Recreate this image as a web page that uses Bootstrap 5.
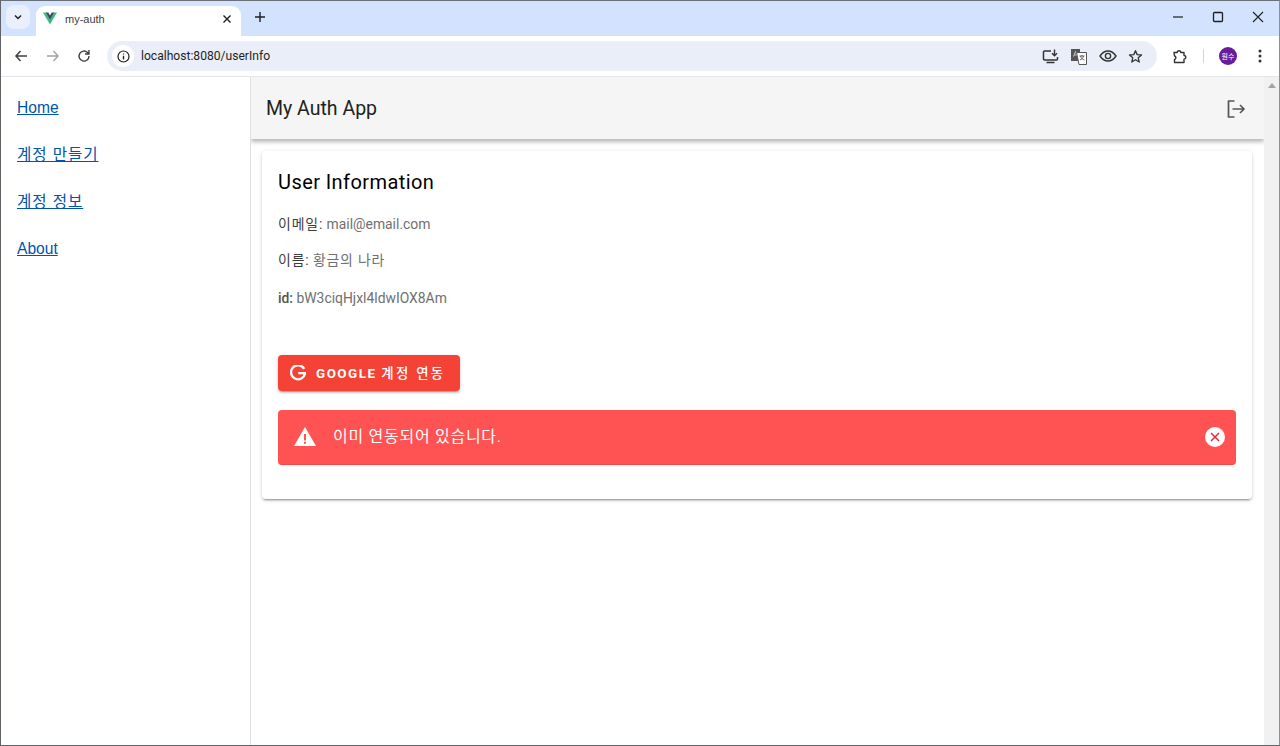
<!DOCTYPE html>
<html lang="ko">
<head>
<meta charset="utf-8">
<title>my-auth</title>
<link href="https://cdn.jsdelivr.net/npm/bootstrap@5.3.0/dist/css/bootstrap.min.css" rel="stylesheet">
<style>
html,body{height:746px;overflow:hidden;margin:0}
body{font-family:Roboto,"Noto Sans CJK KR",sans-serif;background:#fff;color:#000}
.win-frame{height:746px;border:1px solid #5f6368;border-right-color:#8a8f98;border-bottom-color:#5f6368;border-top-color:#6b7078}
.tabstrip{height:35px;background:#d3e3fd;padding-left:5px}
.tab-menu{width:24px;height:24px;margin-top:4px;background:#e9f0fc;border-radius:8px}
.chrome-tab{width:205px;height:30px;margin-top:5px;margin-left:6px;background:#fff;border-radius:9px 9px 0 0;padding:0 9px 5px 7px;font:11px "Liberation Sans",Arial,sans-serif;color:#3c4043}
.tab-title{margin-left:8px}
.newtab-btn{margin-left:13px;padding-bottom:3px}
.win-btns{margin-left:auto;gap:28px;padding-right:15px;padding-bottom:3px}
.toolbar-row{height:41px;background:#fff;border-bottom:1px solid #e3e5e8;border-radius:0;padding-left:12px}
.nav-ico{width:16px;height:16px}
.nav-gap{gap:15.500px}
.omnibox{flex:none;margin-left:15px;width:1050px;height:30px;border-radius:15px;background:#e9eef8;padding-left:5px;font:12.100px Roboto,sans-serif;color:#1f1f1f}
.info-pill{width:22px;height:22px;border-radius:50%;background:#fff;margin-right:7px}
.omni-icons{margin-left:auto;gap:11.300px;padding-right:14px}
.ext-zone{flex:none;margin-left:15px;width:92px}
.sep-bar{width:1px;height:14px;background:#c7d7f3;margin:0 15px 0 15px}
.avatar-dot{width:18px;height:18px;border-radius:50%;background:#6a1b9a;color:#fff;font:7px "Noto Sans CJK KR",sans-serif;line-height:18px;text-align:center}
.kebab{margin-left:21px}
.page-area{height:668px}
.side-rail{width:250px;flex:none;border-right:1px solid #e0e0e0;padding:19px 0 0 16px;font:15.600px "Noto Sans CJK KR",sans-serif}
.side-rail a{display:block;height:47px;line-height:24px;color:#0054ae;font-family:"Liberation Sans","Noto Sans CJK KR",sans-serif}
.ko-link{letter-spacing:.9px}
.main-col{flex:1;min-width:0;overflow:hidden}
.app-bar{height:62px;background:#f5f5f5;padding:1px 17px 0 15px;box-shadow:0 3px 4px rgba(0,0,0,.28);position:relative;font-size:19.500px;color:#212121}
.main-body{padding:12px 12px 12px 11px}
.info-panel{height:348px;border:0;border-radius:4px;padding:16px;box-shadow:0 3px 1px -2px rgba(0,0,0,.2),0 2px 2px rgba(0,0,0,.14),0 1px 5px rgba(0,0,0,.12)}
.panel-title{font-size:20px;font-weight:400;line-height:30px;margin:0 0 17px;letter-spacing:.42px}
.info-line{font-size:13.900px;line-height:20px;color:#707070;margin:0}
.info-line b{font-weight:400;color:#3d3d3d;letter-spacing:.85px}
.info-line b.latin-key{font-weight:500;color:#555;letter-spacing:0}
.ko-val{letter-spacing:.8px}
.line-a{margin-bottom:16px}
.line-b{margin-bottom:18px}
.g-btn{width:182px;height:36px;margin-top:47px;background:#f44336;border:0;border-radius:4px;color:#fff;font-size:13.400px;font-weight:700;letter-spacing:1.500px;padding:0 0 0 12px;box-shadow:0 3px 1px -2px rgba(0,0,0,.2),0 2px 2px rgba(0,0,0,.14),0 1px 5px rgba(0,0,0,.12)}
.g-btn:hover{background:#f44336;color:#fff}
.g-label{margin-left:10px;padding-top:3px}
.g-ko{font-weight:500;letter-spacing:2.300px}
.err-alert{height:55px;margin-top:19px;background:#ff5252;border:0;border-bottom:1px solid #f44;border-radius:4px;color:#fff;padding:0 11px 0 16px;font-size:16px;margin-bottom:0}
.err-text{margin-left:17px;letter-spacing:.72px}
.err-close{margin-left:auto;width:20px;height:20px;border-radius:50%;background:#fff}
.scroll-rail{width:15px;flex:none;background:#f1f1f1}
.arrow-up{width:0;height:0;border-left:4px solid transparent;border-right:4px solid transparent;border-bottom:5px solid #a3a3a3;margin:6px auto 0}
</style>
</head>
<body>
<div class="win-frame d-flex flex-column">
  <div class="tabstrip d-flex">
    <div class="tab-menu d-flex align-items-center justify-content-center">
      <svg width="10" height="10" viewBox="0 0 10 10"><path d="M2 3.500 5 6.500 8 3.500" fill="none" stroke="#1f1f1f" stroke-width="1.500"/></svg>
    </div>
    <div class="chrome-tab d-flex align-items-center">
      <svg width="14" height="13" viewBox="0 0 14 12"><path d="M0 0h3.500L7 6 10.500 0H14L7 12z" fill="#41b883"/><path d="M3 0h2.300L7 3 8.700 0H11L7 7z" fill="#35495e"/></svg>
      <span class="tab-title">my-auth</span>
      <svg class="ms-auto" width="10" height="10" viewBox="0 0 10 10"><path d="M1.500 1.500l7 7M8.500 1.500l-7 7" stroke="#1f1f1f" stroke-width="1.400"/></svg>
    </div>
    <div class="newtab-btn d-flex align-items-center">
      <svg width="12" height="12" viewBox="0 0 12 12"><path d="M6 1v10M1 6h10" stroke="#1f1f1f" stroke-width="1.400"/></svg>
    </div>
    <div class="win-btns d-flex align-items-center">
      <svg width="12" height="12" viewBox="0 0 12 12"><path d="M1 6h10" stroke="#1f1f1f" stroke-width="1.200"/></svg>
      <svg width="12" height="12" viewBox="0 0 12 12"><rect x="1.500" y="1.500" width="9" height="9" rx="1" fill="none" stroke="#1f1f1f" stroke-width="1.300"/></svg>
      <svg width="12" height="12" viewBox="0 0 12 12"><path d="M1 1l10 10M11 1 1 11" stroke="#1f1f1f" stroke-width="1.100"/></svg>
    </div>
  </div>
  <div class="toolbar-row d-flex align-items-center">
    <div class="d-flex nav-gap align-items-center">
      <svg class="nav-ico" viewBox="0 0 16 16"><path d="M14 8H3M7.500 3 3 8l4.500 5" fill="none" stroke="#3c4043" stroke-width="1.500"/></svg>
      <svg class="nav-ico" viewBox="0 0 16 16"><path d="M2 8h11M8.500 3 13 8l-4.500 5" fill="none" stroke="#a0a4a8" stroke-width="1.500"/></svg>
      <svg class="nav-ico" viewBox="0 0 16 16"><path d="M13 8a5 5 0 1 1-1.500-3.500L13 6M13 2v4H9" fill="none" stroke="#3c4043" stroke-width="1.400"/></svg>
    </div>
    <div class="omnibox d-flex align-items-center">
      <span class="info-pill d-flex align-items-center justify-content-center">
        <svg width="13" height="13" viewBox="0 0 13 13"><circle cx="6.500" cy="6.500" r="5.500" fill="none" stroke="#1f1f1f" stroke-width="1.200"/><path d="M6.500 5.700v3.800M6.500 3.400v1.200" stroke="#1f1f1f" stroke-width="1.300"/></svg>
      </span>
      <span>localhost:8080/userInfo</span>
      <div class="omni-icons d-flex align-items-center">
        <svg width="17" height="16" viewBox="0 0 17 16"><path d="M9 3H2.500a1 1 0 0 0-1 1v7a1 1 0 0 0 1 1h12a1 1 0 0 0 1-1V9M4.500 14.500h8" fill="none" stroke="#333" stroke-width="1.500"/><path d="M12.500 1.500v6M10 5.200l2.500 2.500 2.500-2.500" fill="none" stroke="#333" stroke-width="1.400"/></svg>
        <svg width="17" height="17" viewBox="0 0 17 17"><rect x="1" y="1" width="9" height="12" fill="#555"/><path d="M3.500 8.500 5.500 3.500 7.500 8.500M4.300 7h2.400" fill="none" stroke="#ddd" stroke-width=".8"/><path d="M6.500 4.500h10v12H9z" fill="#fff" stroke="#555" stroke-width="1"/><path d="M9.500 8h5M12 7v1M10.500 8c.5 2 2 3.500 4 4M13.500 8c-.5 2-2 3.500-3.500 4" fill="none" stroke="#555" stroke-width=".9"/></svg>
        <svg width="18" height="16" viewBox="0 0 18 16"><path d="M1 8c2.200-3.300 4.800-5 8-5s5.800 1.700 8 5c-2.200 3.300-4.800 5-8 5s-5.800-1.700-8-5z" fill="none" stroke="#333" stroke-width="1.400"/><circle cx="9" cy="8" r="2.600" fill="none" stroke="#333" stroke-width="1.400"/></svg>
        <svg width="15" height="15" viewBox="0 0 16 16"><path d="M8 1.800 9.800 6l4.600.4-3.500 3 1.100 4.500L8 11.500l-4 2.400 1.100-4.500-3.500-3L6.200 6z" fill="none" stroke="#333" stroke-width="1.400" stroke-linejoin="round"/></svg>
      </div>
    </div>
    <div class="ext-zone d-flex align-items-center">
      <svg width="16" height="16" viewBox="0 0 16 16"><path d="M2 4.500h3.200a1.800 1.800 0 0 1 3.600 0H12v3a1.800 1.800 0 0 1 0 3.600V14.500H2.500v-3a1.800 1.800 0 0 0 0-3.500z" fill="none" stroke="#333" stroke-width="1.400" stroke-linejoin="round"/></svg>
      <span class="sep-bar"></span>
      <span class="avatar-dot">원수</span>
      <svg class="kebab" width="4" height="14" viewBox="0 0 4 14"><circle cx="2" cy="2" r="1.500" fill="#333"/><circle cx="2" cy="7" r="1.500" fill="#333"/><circle cx="2" cy="12" r="1.500" fill="#333"/></svg>
    </div>
  </div>
  <div class="page-area d-flex">
    <nav class="side-rail">
      <a href="#">Home</a>
      <a href="#" class="ko-link">계정 만들기</a>
      <a href="#" class="ko-link">계정 정보</a>
      <a href="#">About</a>
    </nav>
    <div class="main-col d-flex flex-column">
      <header class="app-bar d-flex align-items-center justify-content-between">
        <span>My Auth App</span>
        <svg width="22" height="22" viewBox="0 0 22 22"><path d="M9.500 3H3.500v16h6" fill="none" stroke="#555" stroke-width="1.700" stroke-linejoin="round"/><path d="M7.500 11H19M15 7l4 4-4 4" fill="none" stroke="#555" stroke-width="1.600"/></svg>
      </header>
      <main class="main-body">
        <div class="card info-panel">
          <h2 class="panel-title">User Information</h2>
          <p class="info-line line-a"><b>이메일:</b> mail@email.com</p>
          <p class="info-line line-b"><b>이름:</b> <span class="ko-val">황금의 나라</span></p>
          <p class="info-line"><b class="latin-key">id:</b> bW3ciqHjxl4ldwIOX8Am</p>
          <button type="button" class="btn g-btn d-flex align-items-center">
            <svg width="16" height="16" viewBox="0 0 16 16"><path d="M14.200 3.900A7 7 0 1 0 15 8.200H8.300" fill="none" stroke="#fff" stroke-width="2.300"/></svg>
            <span class="g-label">GOOGLE <span class="g-ko">계정 연동</span></span>
          </button>
          <div class="alert err-alert d-flex align-items-center" role="alert">
            <svg width="22" height="20" viewBox="0 0 22 20"><path d="M11 0 22 19H0z" fill="#fff"/><path d="M11 7v6.500M11 14.800v2" stroke="#ff5252" stroke-width="2"/></svg>
            <span class="err-text">이미 연동되어 있습니다.</span>
            <span class="err-close d-flex align-items-center justify-content-center">
              <svg width="10" height="10" viewBox="0 0 10 10"><path d="M1 1l8 8M9 1 1 9" stroke="#e8263a" stroke-width="1.500"/></svg>
            </span>
          </div>
        </div>
      </main>
    </div>
    <div class="scroll-rail"><div class="arrow-up"></div></div>
  </div>
</div>
</body>
</html>
